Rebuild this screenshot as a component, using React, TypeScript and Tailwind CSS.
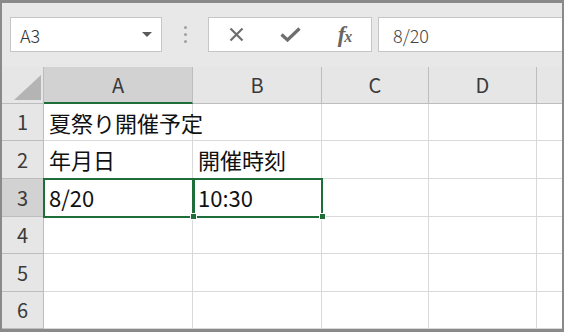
import React from "react";

const cols = [
  { key: "A", w: 149 },
  { key: "B", w: 129 },
  { key: "C", w: 107 },
  { key: "D", w: 108 },
];
const rowHeights = [37, 38, 38, 37, 38, 37];

const cellData: Record<string, string> = {
  "1A": "夏祭り開催予定",
  "2A": "年月日",
  "2B": "開催時刻",
  "3A": "8/20",
  "3B": "10:30",
};

export default function App() {
  const font = { fontFamily: '"Noto Sans CJK JP", "Noto Sans", sans-serif' };
  return (
    <div
      className="w-[564px] h-[332px] overflow-hidden border-t-[3px] border-l-2 border-r-2 border-b-[3px] border-[#8a8a8a] bg-[#e8e8e8] flex flex-col"
      style={font}
    >
      {/* Toolbar */}
      <div className="h-[64px] shrink-0 flex items-start pt-[14px] pl-[8px] bg-[#e8e8e8]">
        <div className="w-[152px] h-[35px] bg-white border border-[#c6c6c6] flex items-center pl-[9px] pr-[9px]">
          <span className="text-[18px] text-[#333] leading-none flex-1 font-light">A3</span>
          <svg width="10" height="6" viewBox="0 0 10 6">
            <path d="M0 0 L10 0 L5 5 Z" fill="#5a5a5a" />
          </svg>
        </div>
        <div className="w-[46px] h-[35px] flex flex-col items-center justify-center gap-[4px]">
          <div className="w-[3px] h-[3px] rounded-full bg-[#a0a0a0]" />
          <div className="w-[3px] h-[3px] rounded-full bg-[#a0a0a0]" />
          <div className="w-[3px] h-[3px] rounded-full bg-[#a0a0a0]" />
        </div>
        <div className="w-[164px] h-[35px] bg-white border border-[#c6c6c6] flex items-center">
          <div className="w-[54px] flex justify-center">
            <svg width="15" height="15" viewBox="0 0 15 15">
              <path d="M1.5 1.5 L13.5 13.5 M13.5 1.5 L1.5 13.5" stroke="#6e6e6e" strokeWidth="2.2" fill="none" />
            </svg>
          </div>
          <div className="w-[54px] flex justify-center">
            <svg width="21" height="15" viewBox="0 0 21 15">
              <path d="M1.5 7.5 L7.5 13 L19.5 1.5" stroke="#6e6e6e" strokeWidth="3.2" fill="none" strokeLinejoin="miter" />
            </svg>
          </div>
          <div
            className="w-[54px] flex justify-center items-baseline text-[#666] pl-[2px]"
            style={{ fontFamily: '"Liberation Serif", serif' }}
          >
            <span className="italic font-bold text-[23px] leading-none">f</span>
            <span className="italic font-bold text-[16px] leading-none -ml-[1px]">x</span>
          </div>
        </div>
        <div className="ml-[6px] flex-1 h-[35px] bg-white border-t border-b border-l border-[#c6c6c6] flex items-center pl-[14px]">
          <span className="text-[18px] text-[#444] leading-none font-light">8/20</span>
        </div>
      </div>

      {/* Grid */}
      <div className="relative flex-1 bg-white">
        {/* Header row */}
        <div className="flex h-[37px]">
          <div className="w-[42px] shrink-0 bg-[#e6e6e6] border-r border-b border-[#bdbdbd] relative">
            <svg className="absolute left-[12px] top-[8px]" width="27" height="25" viewBox="0 0 27 25">
              <path d="M0 25 L27 25 L27 0 Z" fill="#b4b4b4" />
            </svg>
          </div>
          {cols.map((c) => (
            <div
              key={c.key}
              style={{ width: c.w }}
              className={
                c.key === "A"
                  ? "shrink-0 bg-[#d2d2d2] border-r border-[#bdbdbd] border-b-2 border-b-[#1e6e3a] flex items-center justify-center text-[20px] text-[#3a3a3a]"
                  : "shrink-0 bg-[#e6e6e6] border-r border-b border-[#bdbdbd] flex items-center justify-center text-[20px] text-[#3a3a3a]"
              }
            >
              {c.key}
            </div>
          ))}
          <div className="flex-1 bg-[#e6e6e6] border-b border-[#bdbdbd]" />
        </div>

        {/* Rows */}
        {rowHeights.map((h, i) => {
          const r = i + 1;
          return (
            <div key={r} className="flex" style={{ height: h }}>
              <div
                className={
                  r === 3
                    ? "w-[42px] shrink-0 bg-[#d2d2d2] border-r border-b border-[#bdbdbd] flex items-center justify-center text-[20px] text-[#3a3a3a]"
                    : "w-[42px] shrink-0 bg-[#e6e6e6] border-r border-b border-[#bdbdbd] flex items-center justify-center text-[20px] text-[#3a3a3a]"
                }
              >
                {r}
              </div>
              {cols.map((c) => (
                <div
                  key={c.key}
                  style={{ width: c.w }}
                  className="shrink-0 border-r border-b border-[#d9d9d9] flex items-center pl-[5px] text-[22px] text-[#111] whitespace-nowrap overflow-visible"
                >
                  {cellData[`${r}${c.key}`] ?? ""}
                </div>
              ))}
              <div className="flex-1 border-b border-[#d9d9d9]" />
            </div>
          );
        })}

        {/* Selection overlays */}
        <div className="absolute left-[41px] top-[111px] w-[152px] h-[40px] border-2 border-[#1e6e3a] pointer-events-none" />
        <div className="absolute left-[190px] top-[111px] w-[131px] h-[40px] border-2 border-[#1e6e3a] pointer-events-none" />
        <div className="absolute left-[188px] top-[146px] w-[7px] h-[7px] bg-[#1e6e3a] border border-white" />
        <div className="absolute left-[317px] top-[146px] w-[7px] h-[7px] bg-[#1e6e3a] border border-white" />
      </div>
    </div>
  );
}
